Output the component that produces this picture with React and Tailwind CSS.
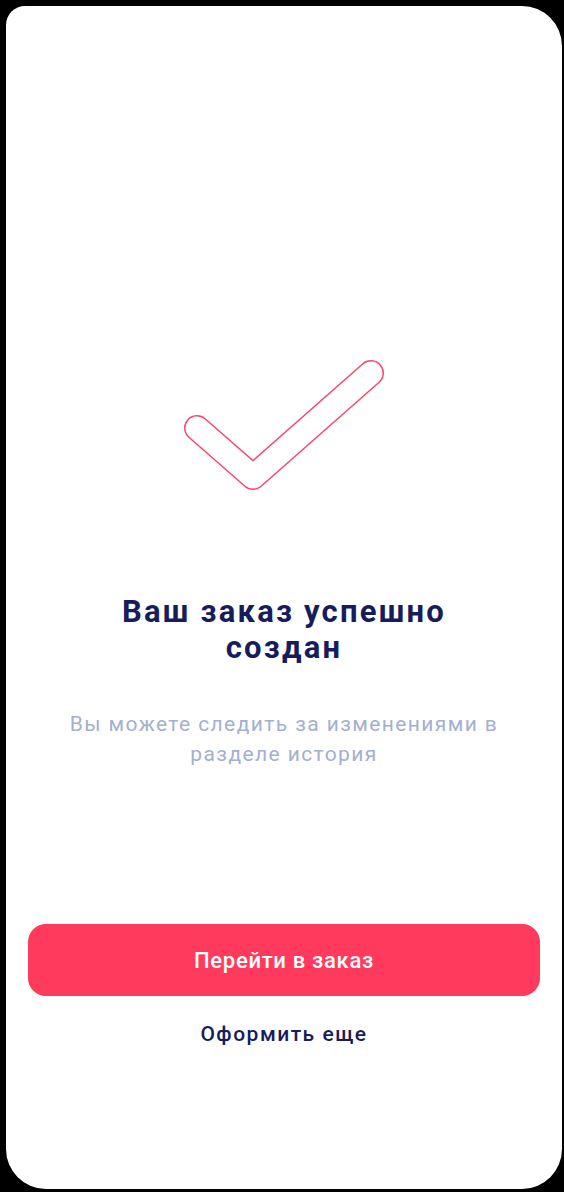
import React from "react";

function CheckIcon() {
  const d = "M23 78 L79 127 L197 23";
  return (
    <svg width="220" height="150" viewBox="0 0 220 150" fill="none">
      <path d={d} stroke="#f9466a" strokeWidth="26" strokeLinecap="round" strokeLinejoin="round" />
      <path d={d} stroke="#ffffff" strokeWidth="23" strokeLinecap="round" strokeLinejoin="round" />
    </svg>
  );
}

export default function App() {
  return (
    <div className="h-[1192px] w-[564px] bg-black pt-[6px] pl-[6px]" style={{ fontFamily: "Roboto, 'Noto Sans', sans-serif" }}>
      <div className="flex h-[1183px] w-[556px] flex-col items-center rounded-[40px] rounded-tl-[19px] bg-white">
        <div className="mt-[344px]">
          <CheckIcon />
        </div>

        <h1 className="mt-[94px] w-[350px] text-center text-[31px] font-bold leading-[36px] tracking-[2.2px] text-[#171c5c]">
          Ваш заказ успешно создан
        </h1>

        <p className="mt-[43px] w-[450px] text-center text-[21px] leading-[30px] tracking-[1.4px] text-[#a3b0d0]">
          Вы можете следить за изменениями в разделе история
        </p>

        <button className="mt-[155px] flex h-[72px] w-[512px] items-center justify-center rounded-[18px] bg-[#ff3a5c] text-[22px] font-medium tracking-[0.7px] text-white">
          Перейти в заказ
        </button>

        <button className="mt-[26px] h-[24px] text-[21px] font-medium leading-[24px] tracking-[1.5px] text-[#171c5c]">
          Оформить еще
        </button>
      </div>
    </div>
  );
}
